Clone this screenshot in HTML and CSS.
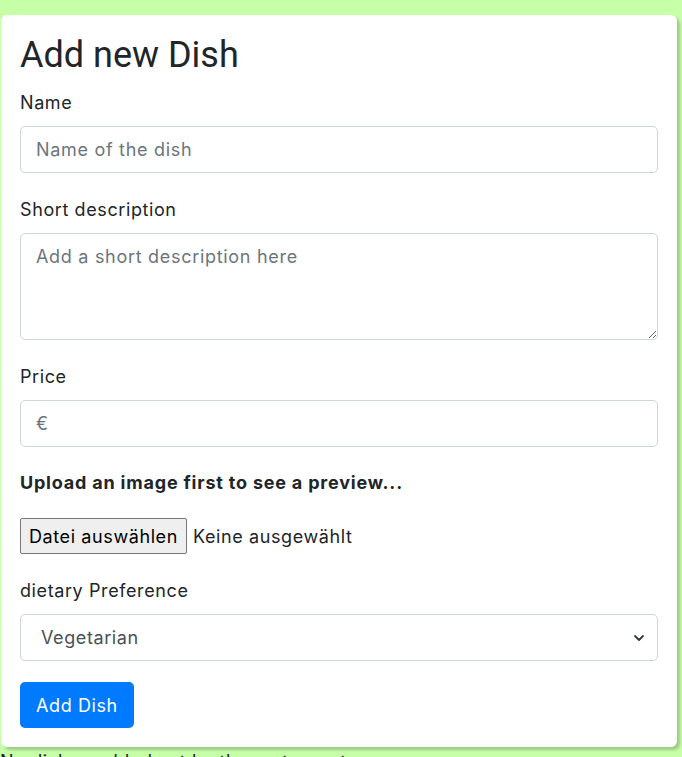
FILE: index.html
```html
<!DOCTYPE html>
<html lang="en">
<head>
<meta charset="utf-8">
<title>Add new Dish</title>
<link rel="stylesheet" href="styles.css">
</head>
<body>
<div class="card">
  <h2 class="title">Add new Dish</h2>
  <form class="form">
    <label class="label" for="name">Name</label>
    <input class="control" id="name" type="text" placeholder="Name of the dish">

    <label class="label gap" for="desc">Short description</label>
    <textarea class="control area" id="desc" placeholder="Add a short description here"></textarea>

    <label class="label gap" for="price">Price</label>
    <input class="control" id="price" type="text" placeholder="€">

    <p class="hint">Upload an image first to see a preview...</p>
    <div class="file-row">
      <span class="file-btn">Datei auswählen</span>
      <span class="file-text">Keine ausgewählt</span>
    </div>

    <label class="label gap" for="diet">dietary Preference</label>
    <div class="select">
      <span>Vegetarian</span>
      <svg class="chev" width="12" height="10" viewBox="0 0 12 10"><path d="M2 3l4 4 4-4" fill="none" stroke="#343a40" stroke-width="1.8" stroke-linecap="round" stroke-linejoin="round"/></svg>
    </div>

    <div class="actions"><span class="btn">Add Dish</span></div>
  </form>
</div>
<p class="empty">No dishes added yet by the restaurant</p>
</body>
</html>
```

FILE: styles.css
```css
html, body {
  margin: 0;
  padding: 0;
}
body {
  background: #c6ffa8;
  font-family: Inter, "Liberation Sans", sans-serif;
  color: #212529;
  font-size: 18px;
  letter-spacing: 0.6px;
}
.card {
  margin: 15px 5px 0 1px;
  background: #fff;
  border-radius: 6px;
  box-shadow: 3px 3px 3px rgba(0,0,0,0.2);
  padding: 19px 19px 19px 19px;
}
.title {
  margin: 0 0 12px 0;
  font-family: Roboto, "Liberation Sans", sans-serif;
  font-size: 36px;
  font-weight: 400;
  line-height: 43px;
  letter-spacing: 0;
}
.form {
  display: flex;
  flex-direction: column;
}
.label {
  font-size: 18px;
  line-height: 27px;
  margin-bottom: 10px;
}
.label.gap {
  margin-top: 23px;
}
.control {
  box-sizing: border-box;
  width: 100%;
  height: 47px;
  border: 1px solid #ced4da;
  border-radius: 5px;
  padding: 0 15px;
  font-family: inherit;
  font-size: 18px;
  letter-spacing: 0.7px;
  color: #495057;
  margin: 0;
}
.control::placeholder {
  color: #6c757d;
}
.area {
  height: 107px;
  padding-top: 12px;
  resize: vertical;
}
.hint {
  margin: 22px 0 0 0;
  font-weight: 700;
  font-size: 18px;
  line-height: 27px;
  letter-spacing: 0.8px;
}
.file-row {
  display: flex;
  align-items: center;
  gap: 6px;
  margin-top: 22px;
  font-size: 18px;
}
.file-btn {
  box-sizing: border-box;
  height: 36px;
  display: inline-flex;
  align-items: center;
  padding: 0 8px;
  background: #efefef;
  border: 1px solid #767676;
  border-radius: 2px;
  color: #000;
  letter-spacing: 0.6px;
}
.file-text {
  color: #212529;
  letter-spacing: 0.6px;
}
.select {
  box-sizing: border-box;
  height: 47px;
  border: 1px solid #ced4da;
  border-radius: 5px;
  display: flex;
  align-items: center;
  justify-content: space-between;
  padding: 0 12px 0 20px;
  color: #495057;
}
.chev {
  display: block;
}
.actions {
  margin-top: 21px;
}
.btn {
  display: inline-flex;
  align-items: center;
  height: 46px;
  padding: 0 16px;
  background: #007bff;
  color: #fff;
  border-radius: 5px;
  box-sizing: border-box;
}
.empty {
  margin: 3px 0 0 0;
  font-size: 18px;
  line-height: 24px;
}
```
